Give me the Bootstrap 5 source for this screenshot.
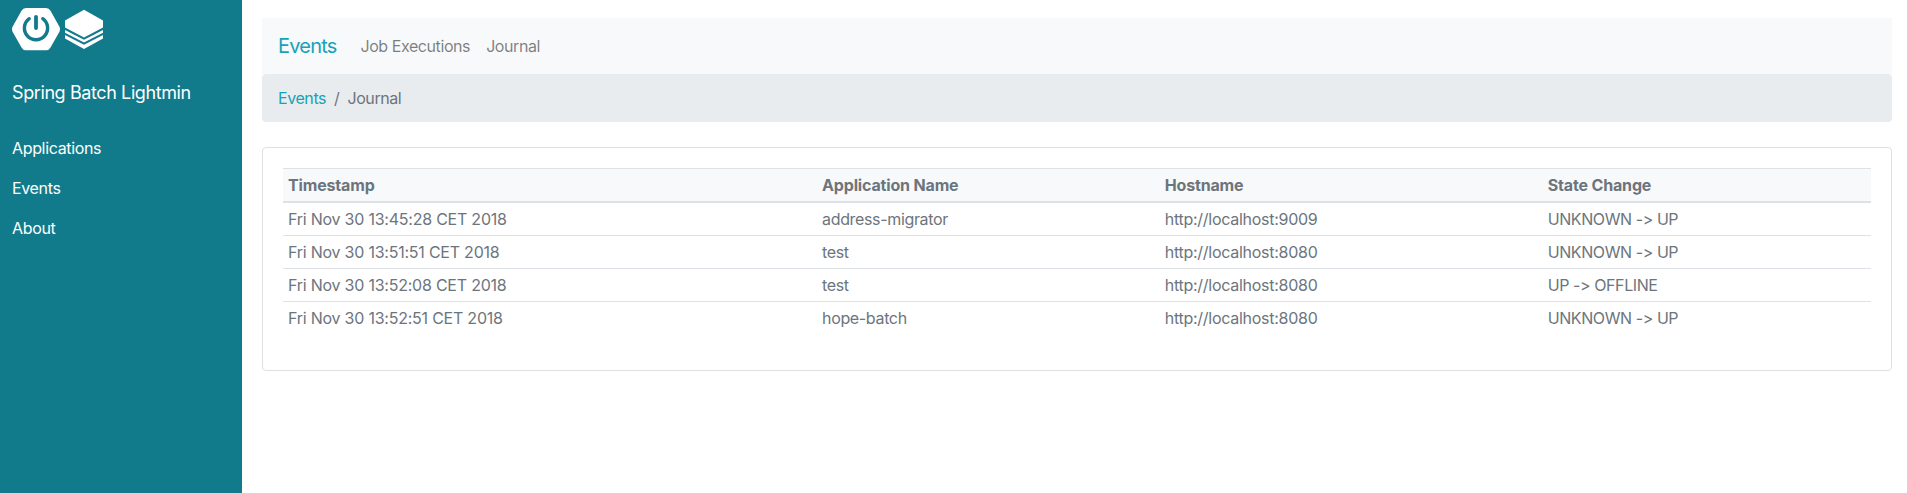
<!DOCTYPE html>
<html lang="en">
<head>
<meta charset="utf-8">
<meta name="viewport" content="width=device-width, initial-scale=1">
<title>Spring Batch Lightmin</title>
<link href="https://cdn.jsdelivr.net/npm/bootstrap@5.3.0/dist/css/bootstrap.min.css" rel="stylesheet">
<style>
body{font-family:Inter,"Liberation Sans",sans-serif;font-size:16px;line-height:24px;color:#6c757d;letter-spacing:-.42px}
.side{width:242px;background:#117a8b;padding:8px 12px 0}
.side .logos{height:44px}
.side .title{font-size:18px;line-height:27px;margin:26px 0 30px;letter-spacing:-.4px;padding-top:1px}
.side .nav-link{color:#fff;padding:0;height:40px;line-height:24px;letter-spacing:-.34px}
.content{padding:18px 15px 0 20px}
.navbar{height:56px;padding:0 16px;background:#f8f9fa}
.navbar-brand{font-size:20px;line-height:30px;color:#17a2b8;margin-right:16px;padding:0;letter-spacing:-.8px}
.navbar-brand:hover{color:#117a8b}
.navbar .nav-link{color:rgba(0,0,0,.5);padding:8px 8px}
.breadcrumb{background:#e9ecef;border-radius:4px;padding:12px 16px;margin:0 0 25px;height:48px}
.breadcrumb a{color:#17a2b8;text-decoration:none}
.breadcrumb .breadcrumb-item,.breadcrumb .breadcrumb-item::before{color:#6c757d}
.card{border-color:#dfdfdf;border-radius:4px;--bs-card-border-radius:4px}
.card-body{padding:20px}
.events{table-layout:fixed;border-collapse:separate;border-spacing:0;margin-bottom:16px;color:#6c757d}
.events>:not(caption)>*>*{padding:4px 5px;color:#6c757d;border:0 solid #dee2e6;border-top-width:1px;height:33px}
.events>thead>tr>th{height:35px;border-bottom-width:2px;background:#f8f9fa;letter-spacing:-.16px}
.events>tbody>tr:first-child>td{border-top-width:0;height:32px}
.events td:nth-child(1){letter-spacing:-.23px}
.events td:nth-child(2){letter-spacing:-.34px}
.events td:nth-child(3){letter-spacing:-.27px}
</style>
</head>
<body>
<div class="d-flex min-vh-100">
  <aside class="side flex-shrink-0 text-white">
    <div class="logos d-flex">
      <svg width="48" height="44" viewBox="0 0 48 44" aria-hidden="true"><path d="M14 0H34Q37 0 38.500 2.700L47.300 18.500Q48.700 21.200 47.300 24L38.500 39.500Q37 42.300 34 42.300H14Q11 42.300 9.500 39.500L.7 24Q-.7 21.200.7 18.500L9.500 2.700Q11 0 14 0Z" fill="#fff"/><path d="M17.200 10.700A11.600 11.600 0 1 0 30.800 10.700" fill="none" stroke="#117a8b" stroke-width="3.400" stroke-linecap="round"/><path d="M24 8.800V20" stroke="#117a8b" stroke-width="3.800" stroke-linecap="round"/></svg>
      <svg class="ms-1" width="40" height="44" viewBox="0 0 40 44" aria-hidden="true"><path d="M20 1.700L39 12.500V19.500L20 29.500L1 19.500V12.500ZM1 22L20 31.700L39 22V24.700L20 34.600L1 24.700ZM1 27L20 36.700L39 27V30.500L20 41L1 30.500Z" fill="#fff"/></svg>
    </div>
    <div class="title"><span>Spring Batch Lightmin</span></div>
    <nav class="nav flex-column">
      <a class="nav-link" href="#">Applications</a>
      <a class="nav-link" href="#">Events</a>
      <a class="nav-link" href="#">About</a>
    </nav>
  </aside>
  <main class="content flex-grow-1">
    <nav class="navbar navbar-expand justify-content-start">
      <a class="navbar-brand" href="#">Events</a>
      <div class="navbar-nav">
        <a class="nav-link" href="#">Job Executions</a>
        <a class="nav-link" href="#">Journal</a>
      </div>
    </nav>
    <ol class="breadcrumb">
      <li class="breadcrumb-item"><a href="#">Events</a></li>
      <li class="breadcrumb-item active">Journal</li>
    </ol>
    <section class="card">
      <div class="card-body">
        <table class="table events">
          <colgroup><col style="width:33.63%"><col style="width:21.58%"><col style="width:24.12%"><col></colgroup>
          <thead><tr><th>Timestamp</th><th>Application Name</th><th>Hostname</th><th>State Change</th></tr></thead>
          <tbody>
            <tr><td>Fri Nov 30 13:45:28 CET 2018</td><td>address-migrator</td><td>http://localhost:9009</td><td>UNKNOWN -&gt; UP</td></tr>
            <tr><td>Fri Nov 30 13:51:51 CET 2018</td><td>test</td><td>http://localhost:8080</td><td>UNKNOWN -&gt; UP</td></tr>
            <tr><td>Fri Nov 30 13:52:08 CET 2018</td><td>test</td><td>http://localhost:8080</td><td>UP -&gt; OFFLINE</td></tr>
            <tr><td>Fri Nov 30 13:52:51 CET 2018</td><td>hope-batch</td><td>http://localhost:8080</td><td>UNKNOWN -&gt; UP</td></tr>
          </tbody>
        </table>
      </div>
    </section>
  </main>
</div>
<script src="https://cdn.jsdelivr.net/npm/bootstrap@5.3.0/dist/js/bootstrap.bundle.min.js"></script>
</body>
</html>
